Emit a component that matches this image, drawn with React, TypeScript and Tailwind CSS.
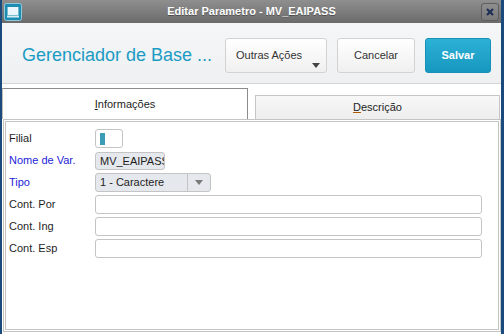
import React from "react";

const font = { fontFamily: '"Liberation Sans", Arial, sans-serif' };

function WinIcon() {
  return (
    <svg width="18" height="18" viewBox="0 0 18 18">
      <rect x="0.5" y="0.5" width="17" height="17" rx="2" fill="#1c8db0" stroke="#8fc9db" />
      <rect x="4" y="4.5" width="10" height="7" fill="#e9f6fb" stroke="#ffffff" strokeWidth="0.8" />
      <rect x="3" y="12.5" width="12" height="2" fill="#d8eef6" />
    </svg>
  );
}

function Label({ children, blue }: { children: React.ReactNode; blue?: boolean }) {
  return (
    <div className={`w-[86px] text-[11px] leading-[19px] ${blue ? "text-[#1d1dd8]" : "text-[#1e1e1e]"}`}>
      {children}
    </div>
  );
}

export default function App() {
  return (
    <div
      style={font}
      className="w-[504px] h-[334px] flex flex-col bg-white border-l-2 border-r-[3px] border-[#1b4a7d] overflow-hidden"
    >
      {/* Title bar */}
      <div className="h-[23px] flex items-center bg-gradient-to-b from-[#8f8f8f] to-[#6b6b6b] px-[2px]">
        <WinIcon />
        <div className="flex-1 text-center text-white font-bold text-[11px] [text-shadow:0_1px_0_rgba(0,0,0,0.35)]">
          Editar Parametro - MV_EAIPASS
        </div>
        <div className="w-[18px] h-[18px] rounded-[3px] border border-[#5e5e5e] bg-gradient-to-b from-[#8e8e8e] to-[#7a7a7a] flex items-center justify-center">
          <svg width="8" height="8" viewBox="0 0 8 8">
            <path d="M1 1 L7 7 M7 1 L1 7" stroke="#1f2f58" strokeWidth="2.2" />
          </svg>
        </div>
      </div>

      {/* Header */}
      <div className="h-[61px] flex items-center pt-[5px] bg-gradient-to-b from-[#f5f6f7] to-[#eef0f1] border-b border-[#d4d4d4]">
        <div className="pl-[20px] text-[18px] text-[#1b9bc4] whitespace-nowrap">Gerenciador de Base ...</div>
        <div className="ml-auto mr-[10px] flex gap-[10px]">
          <div className="relative w-[102px] h-[35px] rounded-[3px] border border-[#d2d2d2] bg-gradient-to-b from-white to-[#f0f0f0] flex items-center pl-[10px] text-[11px] text-[#333]">
            Outras Ações
            <svg className="absolute right-[6px] top-[24px]" width="8" height="5" viewBox="0 0 8 5">
              <path d="M0 0 L8 0 L4 5 Z" fill="#444" />
            </svg>
          </div>
          <div className="w-[78px] h-[35px] rounded-[3px] border border-[#d2d2d2] bg-gradient-to-b from-white to-[#f0f0f0] flex items-center justify-center text-[11px] text-[#333]">
            Cancelar
          </div>
          <div className="w-[66px] h-[35px] rounded-[3px] border border-[#1790b6] bg-gradient-to-b from-[#2db1d6] to-[#1597bf] flex items-center justify-center text-[11px] font-bold text-white">
            Salvar
          </div>
        </div>
      </div>

      {/* Tabs */}
      <div className="h-[4px] bg-white" />
      <div className="flex items-end h-[31px] gap-[7px]">
        <div className="w-[246px] h-[31px] border-t border-r border-[#8c8c8c] border-l border-l-[#bdbdbd] bg-white flex items-center justify-center text-[11px] text-[#1e1e1e]">
          <span><span className="underline">I</span>nformações</span>
        </div>
        <div className="flex-1 h-[24px] border border-b-0 border-[#c6c6c6] bg-gradient-to-b from-[#f8f8f8] to-[#ededed] flex items-center justify-center text-[11px] text-[#1e1e1e] mr-[1px]">
          <span><span className="underline decoration-[#b05a00]">D</span>escrição</span>
        </div>
      </div>

      {/* Panel */}
      <div className="flex-1 ml-[1px] mb-[2px] border-[3px] border-double border-[#c4c4c4] bg-white">
        <div className="pt-[7px] pl-[3px] flex flex-col gap-[3px]">
          <div className="flex items-center h-[19px]">
            <Label>Filial</Label>
            <div className="w-[28px] h-[19px] rounded-[3px] border border-[#c4c4c4] bg-white pl-[4px] pt-[3px]">
              <div className="w-[5px] h-[12px] bg-[#3a9db4]" />
            </div>
          </div>
          <div className="flex items-center h-[19px]">
            <Label blue>Nome de Var.</Label>
            <div className="w-[70px] h-[18px] rounded-[3px] border border-[#c4c4c4] bg-[#e5e8ec] pl-[4px] text-[11px] leading-[16px] text-[#1e1e1e] overflow-hidden whitespace-nowrap">
              MV_EAIPASS
            </div>
          </div>
          <div className="flex items-center h-[19px]">
            <Label blue>Tipo</Label>
            <div className="w-[116px] h-[19px] rounded-[3px] border border-[#c4c4c4] bg-[#e5e8ec] flex text-[11px] text-[#1e1e1e]">
              <div className="flex-1 pl-[4px] leading-[17px]">1 - Caractere</div>
              <div className="w-[23px] border-l border-[#c4c4c4] flex items-center justify-center">
                <svg width="8" height="5" viewBox="0 0 8 5">
                  <path d="M0 0 L8 0 L4 5 Z" fill="#7a7a7a" />
                </svg>
              </div>
            </div>
          </div>
          {["Cont. Por", "Cont. Ing", "Cont. Esp"].map((l) => (
            <div key={l} className="flex items-center h-[19px]">
              <Label>{l}</Label>
              <div className="w-[387px] h-[19px] rounded-[3px] border border-[#c4c4c4] bg-white" />
            </div>
          ))}
        </div>
      </div>
    </div>
  );
}
